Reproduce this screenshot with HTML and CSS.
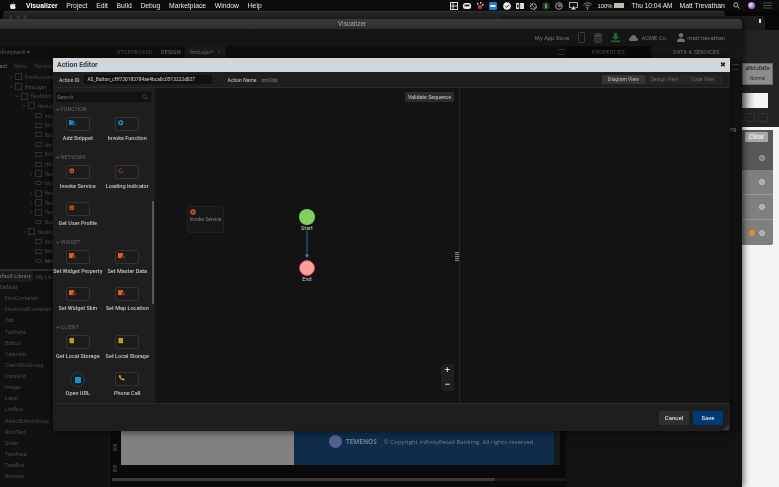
FILE: index.html
```html
<!DOCTYPE html>
<html lang="en">
<head>
<meta charset="utf-8">
<title>Action Editor</title>
<link rel="stylesheet" href="styles.css">
</head>
<body>
<svg class="defs" width="0" height="0" aria-hidden="true">
  <symbol id="gear" viewBox="0 0 6 6"><circle cx="3" cy="3" r="2.1" fill="#1c1c1c" stroke="#ea601c" stroke-width="1.2"/><circle cx="3" cy="3" r=".8" fill="#ea601c"/></symbol>
  <symbol id="gearDim" viewBox="0 0 6 6"><circle cx="3" cy="3" r="2.1" fill="none" stroke="#a8481c" stroke-width=".9" stroke-dasharray="10 2"/></symbol>
  <symbol id="blueRing" viewBox="0 0 6 6"><circle cx="3" cy="3" r="2.1" fill="#0c2a3a" stroke="#12a2e2" stroke-width="1.3"/></symbol>
  <symbol id="widget" viewBox="0 0 9 7"><rect x="0" y="0" width="6" height="6" fill="#ee5a1e"/><circle cx="6.5" cy="4.5" r="2.2" fill="#5e3218"/></symbol>
  <symbol id="snippet" viewBox="0 0 9 7"><path d="M0 0h2.5l.7.8H6V6H0z" fill="#1688d6"/><circle cx="6.5" cy="4.5" r="2.2" fill="#174a66"/></symbol>
  <symbol id="db" viewBox="0 0 5 6"><rect width="5" height="6" rx="1" fill="#e2a21c"/><path d="M0 2h5M0 4h5" stroke="#7a5a12" stroke-width=".4"/></symbol>
  <symbol id="phone" viewBox="0 0 7 6"><path d="M.6.5 2 0l.9 1.4-.7.6c.3.8.9 1.4 1.8 1.8l.7-.6L6.6 4l-.4 1.3C3.300 5.600.6 3.200.6.500z" fill="#e8a01c"/></symbol>
  <symbol id="mag" viewBox="0 0 8 8"><circle cx="3.300" cy="3.300" r="2.400" fill="none" stroke="currentColor" stroke-width=".9"/><path d="M5.100 5.100 7.500 7.500" stroke="currentColor" stroke-width="1"/></symbol>
  <symbol id="chev" viewBox="0 0 6 4"><path d="M.7.7 3 3.200 5.300.7" fill="none" stroke="currentColor" stroke-width=".9"/></symbol>
  <symbol id="chevr" viewBox="0 0 4 6"><path d="M.7.700 3.200 3 .7 5.300" fill="none" stroke="currentColor" stroke-width=".8"/></symbol>
</svg>

<div class="desktop">
  <header class="menubar">
    <svg class="apple" viewBox="0 0 10 12"><path d="M7 0c.1 1-.9 2.300-2.100 2.300C4.800 1.200 5.900.100 7 0zM9.600 8.500c-.5 1.400-1.700 3.300-2.800 3.300-.8 0-1.100-.5-2-.5s-1.200.5-2 .5C1.500 11.800 0 9.100 0 6.900 0 4.600 1.500 3.200 3 3.200c.8 0 1.400.5 2 .5s1.300-.6 2.300-.5c.6 0 1.700.2 2.300 1.200-1.800 1.100-1.500 3.500 0 4.100z" fill="#e8e8e8"/></svg>
    <nav class="menus">
      <span class="menu-strong">Visualizer</span><span>Project</span><span>Edit</span><span>Build</span><span>Debug</span><span>Marketplace</span><span>Window</span><span>Help</span>
    </nav>
    <div class="status">
      <svg class="st" viewBox="0 0 8 8"><rect x=".5" y=".5" width="7" height="7" fill="none" stroke="#ddd"/><path d="M.5 4h7M3 .5v7" stroke="#ddd"/></svg>
      <svg class="st" viewBox="0 0 8 8"><rect y="1" width="8" height="6" rx="2.500" fill="#eee"/><rect x="1.500" y="2.500" width="5" height="2" fill="#333"/></svg>
      <svg class="st" viewBox="0 0 8 8"><circle cx="4" cy="5" r="2.200" fill="#c8302a"/><path d="M1 1h1.500v1.500H1zM4 0h1.500v1.500H4zM6 2h1.500v1.500H6z" fill="#ddd"/></svg>
      <svg class="st" viewBox="0 0 8 8"><rect width="8" height="8" rx="1.500" fill="#2a7ad6"/><rect x="1.500" y="3" width="5" height="2" fill="#dff"/></svg>
      <svg class="st" viewBox="0 0 8 8"><circle cx="4" cy="4" r="3.800" fill="#eee"/><path d="M2.200 4 3.600 5.400 6 2.600" fill="none" stroke="#333"/></svg>
      <svg class="st" viewBox="0 0 8 8"><rect y="1" width="8" height="6" fill="#ddd"/><path d="M3.600 1v6" stroke="#222"/><rect x="1" y="2.500" width="1.500" height="3" fill="#222"/></svg>
      <svg class="st" viewBox="0 0 8 8"><circle cx="4.500" cy="4.500" r="2.800" fill="none" stroke="#aaa" stroke-width="1.200" stroke-dasharray="2 .7"/><path d="M1 1 7 7" stroke="#999" stroke-width=".7"/></svg>
      <svg class="st" viewBox="0 0 8 8"><circle cx="4" cy="4" r="3.800" fill="#1d3a22"/><path d="M4 1.400v5.200M5 2.700H3.400v1.300h1.200v1.300H3" fill="none" stroke="#7cc67c" stroke-width=".7"/></svg>
      <svg class="st" viewBox="0 0 8 8"><circle cx="4" cy="4" r="3.300" fill="none" stroke="#ccc" stroke-width=".8"/><circle cx="4.500" cy="3.500" r="1.800" fill="#777"/></svg>
      <svg class="st st-wide" viewBox="0 0 9 8"><path d="M.5.500h8v5h-2M2.500 5.500h-2v-5" fill="none" stroke="#ddd" stroke-width=".8"/><path d="M4.500 4 7 7.600H2z" fill="#ddd"/></svg>
      <svg class="st st-wide" viewBox="0 0 9 8"><path d="M.5 2.700c2.300-2.400 5.700-2.400 8 0M2 4.200c1.500-1.500 3.500-1.500 5 0M3.300 5.600c.7-.7 1.700-.7 2.400 0" fill="none" stroke="#ccc" stroke-width=".7"/><circle cx="4.500" cy="7" r=".7" fill="#ccc"/></svg>
      <span class="st-text pct">100%</span>
      <span class="battery"><span class="battery-in">⚡</span></span>
      <span class="st-text clock">Thu 10:04 AM</span>
      <span class="st-text who">Matt Trevathan</span>
      <svg class="st st-search" viewBox="0 0 8 8"><use href="#mag"/></svg>
      <span class="siri"></span>
      <svg class="st st-list" viewBox="0 0 9 7"><path d="M0 1h9M0 3.500h9M0 6h9" stroke="#555" stroke-width=".9"/></svg>
    </div>
  </header>

  <div class="backwin backwin-a">
    <div class="lights"><i></i><i></i><i></i></div>
  </div>
  <div class="backwin backwin-b"><span class="backmark"></span></div>

  <aside class="sidewin">
    <div class="side-top">
      <div class="swatch"><span class="swatch-a">aBbCcDdEe</span><span class="swatch-b">Normal</span></div>
      <div class="side-white"></div>
      <div class="side-tools"><i></i><i></i></div>
    </div>
    <div class="side-page"></div>
    <div class="popup">
      <div class="popup-head"><span class="clear">Clear</span></div>
      <div class="popup-row popup-row-sel"><span class="ring"></span></div>
      <div class="popup-row"><span class="ring"></span></div>
      <div class="popup-row"><span class="ring"></span></div>
      <div class="popup-row popup-row-last"><span class="dot-orange"></span><span class="ring"></span></div>
    </div>
  </aside>

  <main class="app">
    <div class="app-title">Visualizer</div>
    <div class="app-toolbar">
      <span class="tb-text tb-store">My App Store</span>
      <svg class="tb-icon" viewBox="0 0 7 11"><rect x=".5" y=".5" width="6" height="10" rx="1" fill="none" stroke="#3a3a3a"/></svg>
      <svg class="tb-icon tb-tablet" viewBox="0 0 8 10"><rect x=".5" y=".5" width="7" height="9" rx="1" fill="#2e2e2e" stroke="#3c3c3c"/><path d="M1.500 2.500h5" stroke="#555"/></svg>
      <svg class="tb-icon tb-dl" viewBox="0 0 9 9"><path d="M3 0h3v3.500h2.200L4.500 7 .8 3.500H3z" fill="#1f6a2e"/><rect y="7.500" width="9" height="1.500" fill="#1f6a2e"/></svg>
      <svg class="tb-icon tb-cloud" viewBox="0 0 9 6"><path d="M2 6C.8 6 0 5.200 0 4.200 0 3.200.8 2.600 1.600 2.600 1.900 1 3.100 0 4.500 0 6 0 7 1 7.200 2.400 8.300 2.500 9 3.300 9 4.200 9 5.200 8.200 6 7 6z" fill="#707070"/></svg>
      <span class="tb-text tb-acme">ACME Co.</span>
      <svg class="tb-icon tb-user" viewBox="0 0 8 9"><circle cx="4" cy="2.300" r="2.200" fill="#707070"/><path d="M0 9c0-3 1.500-3.800 4-3.800S8 6 8 9z" fill="#707070"/></svg>
      <span class="tb-text">matt trevathan</span>
    </div>
    <div class="app-tabs">
      <span class="brand">Infinitybank ▾</span>
      <span class="tab tab-story">STORYBOARD</span>
      <span class="tab tab-design">DESIGN</span>
      <span class="tab-file">frmLogin* <b>×</b></span>
      <span class="tabs-fill"></span>
      <span class="burger"></span>
      <span class="tab tab-props">PROPERTIES</span>
      <span class="tab tab-data">DATA &amp; SERVICES</span>
    </div>
    <div class="app-main">
      <section class="leftcol">
        <div class="subtabs"><span>Project</span><span>Skins</span><span>Templates</span></div>
        <div class="tree">
          <div class="node l1"><svg class="ar"><use href="#chevr"/></svg><i class="bx"></i>frmAccount</div>
          <div class="node l1 ital"><svg class="ar"><use href="#chev"/></svg><i class="bx"></i>frmLogin</div>
          <div class="node l2"><svg class="ar"><use href="#chev"/></svg><i class="bx"></i>flexMain</div>
          <div class="node l3"><svg class="ar"><use href="#chev"/></svg><i class="bx"></i>flexLeft</div>
          <div class="node l4"><i class="sm"></i>imgLogo</div>
          <div class="node l4"><i class="sm"></i>lblWelcome</div>
          <div class="node l4"><i class="sm"></i>lblUser</div>
          <div class="node l4"><i class="sm"></i>tbxUser</div>
          <div class="node l4"><i class="sm"></i>lblPass</div>
          <div class="node l4"><i class="sm"></i>tbxPass</div>
          <div class="node l4"><svg class="ar"><use href="#chevr"/></svg><i class="bx"></i>flexRem</div>
          <div class="node l4"><i class="pill"></i>btnLogin</div>
          <div class="node l4"><svg class="ar"><use href="#chevr"/></svg><i class="bx"></i>flexOne</div>
          <div class="node l4"><svg class="ar"><use href="#chevr"/></svg><i class="bx"></i>flexTwo</div>
          <div class="node l4"><svg class="ar"><use href="#chevr"/></svg><i class="bx"></i>flexSix</div>
          <div class="node l4"><i class="pill"></i>Button</div>
          <div class="node l3"><svg class="ar"><use href="#chev"/></svg><i class="bx"></i>flexRight</div>
          <div class="node l4"><i class="sm"></i>lblInfo</div>
          <div class="node l4"><i class="sm"></i>lblHelp</div>
          <div class="node l4 picked"><i class="pill"></i>btnGo</div>
        </div>
        <div class="libtabs"><span class="libtab-on">Default Library</span><span class="libtab-off">My Library</span></div>
        <div class="lib">
          <div class="lib-head">Default</div>
          <div>FlexContainer</div><div>FlexScrollContainer</div><div>Tab</div><div>TabPane</div><div>Button</div><div>Calendar</div><div>CheckBoxGroup</div><div>DataGrid</div><div>Image</div><div>Label</div><div>ListBox</div><div>RadioButtonGroup</div><div>RichText</div><div>Slider</div><div>TextArea</div><div>TextBox</div><div>Browser</div>
        </div>
      </section>
      <section class="centercol">
        <div class="center-fill"></div>
        <div class="preview">
          <div class="ruler"><span>008</span><span class="ruler-low">009</span></div>
          <div class="pv-gray"></div>
          <div class="pv-blue">
            <span class="pv-logo"></span><span class="pv-brand">TEMENOS</span><span class="pv-copy">© Copyright InfinityRetail Banking. All rights reserved.</span>
          </div>
          <div class="pv-edge"></div>
        </div>
        <div class="hscroll"><span class="hthumb"></span></div>
      </section>
      <section class="rightcol"><span class="ing">ing</span></section>
    </div>
  </main>
  <div class="sidebar-burger"></div>

  <div class="modal">
    <div class="m-head"><span class="m-title">Action Editor</span><span class="m-close">✖</span></div>
    <div class="m-info">
      <label class="m-label">Action ID</label>
      <span class="m-input">AS_Button_cfff730183784ae4bca0c0513222d027</span>
      <label class="m-label m-label-name">Action Name</label>
      <span class="m-value">onClick</span>
      <div class="seg"><span class="seg-on">Diagram View</span><span>Design View</span><span>Code View</span></div>
    </div>
    <div class="m-body">
      <div class="palette">
        <div class="search"><span>Search</span><svg class="search-ic"><use href="#mag"/></svg></div>
        <div class="scroll-thumb"></div>

        <div class="p-head"><svg class="p-chev"><use href="#chev"/></svg>FUNCTION</div>
        <div class="p-grid">
          <div class="item"><span class="tile"><svg class="ic ic-w"><use href="#snippet"/></svg></span>Add Snippet</div>
          <div class="item"><span class="tile"><svg class="ic"><use href="#blueRing"/></svg></span>Invoke Function</div>
        </div>
        <div class="p-head"><svg class="p-chev"><use href="#chev"/></svg>NETWORK</div>
        <div class="p-grid">
          <div class="item"><span class="tile"><svg class="ic"><use href="#gear"/></svg></span>Invoke Service</div>
          <div class="item"><span class="tile"><svg class="ic"><use href="#gearDim"/></svg></span>Loading Indicator</div>
          <div class="item"><span class="tile"><svg class="ic"><use href="#gear"/></svg></span>Get User Profile</div>
        </div>
        <div class="p-head"><svg class="p-chev"><use href="#chev"/></svg>WIDGET</div>
        <div class="p-grid">
          <div class="item"><span class="tile"><svg class="ic ic-w"><use href="#widget"/></svg></span>Set Widget Property</div>
          <div class="item"><span class="tile"><svg class="ic ic-w"><use href="#widget"/></svg></span>Set Master Data</div>
          <div class="item"><span class="tile"><svg class="ic ic-w"><use href="#widget"/></svg></span>Set Widget Skin</div>
          <div class="item"><span class="tile"><svg class="ic ic-w"><use href="#widget"/></svg></span>Set Map Location</div>
        </div>
        <div class="p-head"><svg class="p-chev"><use href="#chev"/></svg>CLIENT</div>
        <div class="p-grid">
          <div class="item"><span class="tile"><svg class="ic"><use href="#db"/></svg></span>Get Local Storage</div>
          <div class="item"><span class="tile"><svg class="ic"><use href="#db"/></svg></span>Set Local Storage</div>
          <div class="item"><span class="tile tile-round"><span class="url-sq"></span></span>Open URL</div>
          <div class="item"><span class="tile"><svg class="ic ic-w"><use href="#phone"/></svg></span>Phone Call</div>
        </div>
      </div>
      <div class="canvas">
        <button class="validate">Validate Sequence</button>
        <div class="svc-node"><svg class="svc-ic"><use href="#gear"/></svg><span>Invoke Service</span></div>
        <div class="start"></div>
        <span class="flow-label start-label">Start</span>
        <svg class="arrow" viewBox="0 0 6 28"><path d="M3 0v24" stroke="#3f63a8" stroke-width="1"/><path d="M1 23.500h4L3 27z" fill="#4d7fd0"/></svg>
        <div class="end"></div>
        <span class="flow-label end-label">End</span>
        <div class="zoomer"><span>+</span><span>−</span></div>
        <div class="grip"></div>
      </div>
      <div class="m-side"></div>
    </div>
    <div class="m-foot">
      <button class="btn btn-cancel">Cancel</button>
      <button class="btn btn-save">Save</button>
      <svg class="resize" viewBox="0 0 6 6"><path d="M0 6 6 0M2 6 6 2M4 6 6 4" stroke="#777" stroke-width=".6"/></svg>
    </div>
  </div>
</div>
</body>
</html>
```

FILE: styles.css
```css
* { box-sizing: border-box; }
html, body { margin: 0; padding: 0; height: 100%; background: #060606; overflow: hidden; }
body { font-family: Roboto, "Liberation Sans", sans-serif; }
.defs { position: absolute; }
.desktop { position: relative; width: 779px; height: 487px; overflow: hidden; background: #060606; filter: blur(.3px); }

/* menu bar */
.menubar { display: flex; align-items: center; height: 11px; background: #0b0b0b; color: #e6e6e6; font: 6.8px "Liberation Sans", sans-serif; padding-left: 10px; }
.apple { width: 6px; height: 7.5px; }
.menus { display: flex; gap: 8.700px; margin-left: 10px; }
.menu-strong { font-weight: 700; color: #fff; }
.status { display: flex; align-items: center; margin-left: auto; padding-right: 7px; }
.st { width: 8px; height: 8px; margin-right: 5.200px; flex: none; }
.st-wide { width: 9px; margin-right: 5.500px; }
.st-text { white-space: nowrap; }
.pct { font-size: 5.800px; width: 16px; }
.battery { width: 10px; height: 5px; background: #bbb; margin-right: 8px; display: flex; align-items: center; justify-content: center; }
.battery-in { font-size: 4px; line-height: 1; color: #222; }
.clock { width: 48px; font-size: 6.600px; }
.who { width: 53px; font-size: 6.800px; }
.st-search { color: #ddd; margin-right: 8px; width: 7px; height: 7px; }
.siri { width: 7.500px; height: 7.500px; border-radius: 50%; background: radial-gradient(circle at 40% 40%, #f3e0f5, #b06ad0 55%, #4a88dc); margin-right: 8px; }
.st-list { width: 9px; height: 7px; margin-right: 0; }

/* background windows */
.backwin { position: absolute; border-radius: 3px 3px 0 0; }
.backwin-a { left: 3px; top: 11px; width: 722px; height: 20px; background: #242424; border-top: 1px solid #333; }
.backwin-b { left: 500px; top: 16px; width: 265px; height: 16px; background: #1c1c1c; }
.backmark { position: absolute; right: 4px; top: 3px; width: 2px; height: 4px; background: #ddd; }
.lights { display: flex; gap: 3px; padding: 3px 6px; }
.lights i { width: 4px; height: 4px; border-radius: 50%; background: #3a3a3a; }

/* window at the right edge */
.sidewin { position: absolute; left: 730px; top: 30px; width: 49px; height: 457px; display: flex; flex-direction: column; background: #f6f4f3; }
.side-top { height: 97px; background: #232323; padding: 33px 0 0 12px; }
.swatch { width: 31px; height: 22px; background: #8c8c8c; border: 1px solid #6a6a6a; display: flex; flex-direction: column; align-items: center; font-size: 4.600px; color: #262626; line-height: 10px; overflow: hidden; }
.swatch-a { font-weight: 500; white-space: nowrap; }
.swatch-b { color: #333; }
.side-white { width: 26px; height: 15px; margin-top: 8px; background: linear-gradient(90deg, #9a9a9a, #f4f4f4 50%, #f4f4f4); }
.side-tools { display: flex; gap: 3px; margin-top: 5px; padding-left: 3px; }
.side-tools i { width: 10px; height: 9px; border: 1px solid #333; border-radius: 2px; }
.side-page { flex: 1; }
.popup { position: absolute; left: 12px; top: 100px; width: 31px; height: 115px; background: #7f7f7f; border-radius: 0 2px 2px 0; display: flex; flex-direction: column; }
.popup-head { height: 15px; padding: 2px 5px 0 3px; background: #585858; }
.clear { display: block; width: 23px; height: 10px; background: #a8a8a8; border-radius: 1px; color: #eee; font-size: 6.500px; font-weight: 700; line-height: 10px; text-align: center; }
.popup-row { height: 25px; display: flex; align-items: center; justify-content: flex-end; gap: 4px; padding-right: 8px; border-bottom: 1px solid #9a9a9a; }
.popup-row-sel { background: #585858; border-bottom: 0; }
.popup-row-last { border-bottom: 0; }
.ring { width: 6px; height: 6px; border-radius: 50%; background: #aaa; border: 1px solid #c4c4c4; }
.popup-row-sel .ring { background: #777; border-color: #aaa; }
.dot-orange { width: 6px; height: 6px; border-radius: 50%; background: #ef8a1e; }
.sidebar-burger { position: absolute; left: 732px; top: 64px; width: 7px; height: 6px; border-top: 1px solid #333; border-bottom: 1px solid #333; }

/* main application window */
.app { position: absolute; left: 0; top: 19px; width: 742px; height: 468px; display: flex; flex-direction: column; background: #0f0f0f; box-shadow: 2px 0 6px rgba(0, 0, 0, .55); color: #666; font-size: 5.400px; }
.app-title { height: 10px; flex: none; background: linear-gradient(#3a3a3a, #2c2c2c); color: #a8a8a8; font-size: 6.500px; line-height: 10px; text-align: center; padding-right: 38px; border-radius: 0 4px 0 0; }
.app-toolbar { height: 17px; flex: none; display: flex; align-items: center; justify-content: flex-end; padding-right: 17px; background: #151515; }
.tb-text { color: #747474; font-size: 5.800px; white-space: nowrap; }
.tb-store { margin-right: 9px; }
.tb-icon { width: 7px; height: 11px; margin-right: 9px; flex: none; }
.tb-tablet { width: 8px; height: 10px; margin-right: 9px; }
.tb-dl { width: 9px; height: 9px; margin-right: 9px; }
.tb-cloud { width: 9px; height: 6px; margin-right: 3px; }
.tb-acme { margin-right: 10px; }
.tb-user { width: 8px; height: 9px; margin-right: 2px; }
.app-tabs { height: 12px; flex: none; display: flex; align-items: center; background: #0e0e0e; white-space: nowrap; }
.brand { margin-left: -3px; width: 120px; color: #585858; font-size: 5.600px; }
.tab { color: #4d4d4d; font-size: 5.200px; letter-spacing: .3px; }
.tab-story { width: 44px; }
.tab-design { color: #7a7a7a; width: 24px; }
.tab-file { height: 12px; width: 41px; background: #1a1a1a; color: #6a6a6a; font-style: italic; line-height: 12px; padding-left: 5px; }
.tab-file b { margin-left: 3px; font-weight: 400; font-style: normal; color: #444; }
.tabs-fill { flex: 1; }
.burger { width: 6px; height: 6px; border-top: 1px solid #333; border-bottom: 1px solid #333; margin-right: 2px; }
.tab-props { width: 85px; height: 12px; line-height: 12px; background: #090909; text-align: center; }
.tab-data { width: 91px; height: 12px; line-height: 12px; color: #7a7a7a; background: #171717; text-align: center; }
.app-main { flex: 1; min-height: 0; display: flex; }

.leftcol { width: 110px; flex: none; display: flex; flex-direction: column; background: #111; border-right: 1px solid #1b1b1b; overflow: hidden; }
.subtabs { height: 14px; flex: none; display: flex; gap: 7px; align-items: center; margin-left: -10px; padding-top: 2px; color: #444; white-space: nowrap; }
.subtabs span:first-child { color: #7a7a7a; }
.tree { height: 197px; flex: none; padding-top: 0; }
.node { height: 9.700px; display: flex; align-items: center; white-space: nowrap; color: #464646; position: relative; }
.ital { font-style: italic; color: #545454; }
.l1 { padding-left: 15px; }
.l2 { padding-left: 21px; }
.l3 { padding-left: 28px; }
.l4 { padding-left: 35px; }
.ar { position: absolute; width: 4px; height: 4px; margin-left: -6px; color: #4a4a4a; }
.bx { width: 7px; height: 7px; border: 1px solid #303030; margin-right: 3px; flex: none; }
.sm { width: 7px; height: 5px; border: 1px solid #303030; margin-right: 3px; flex: none; }
.pill { width: 7px; height: 4px; border: 1px solid #343434; border-radius: 2px; margin-right: 3px; flex: none; }
.picked { color: #2f6ca8; }
.libtabs { height: 13px; flex: none; display: flex; align-items: center; border-top: 2px solid #2c2c2c; white-space: nowrap; margin-left: -5px; font-size: 5.600px; }
.libtab-on { height: 11px; line-height: 11px; width: 38px; background: #1b1b1b; color: #7a7a7a; padding-left: 0; }
.libtab-off { padding-left: 3px; color: #4a4a4a; }
.lib { flex: 1; padding-left: 5px; color: #484848; line-height: 11.130px; }
.lib-head { margin-left: -5px; color: #545454; }

.centercol { width: 456px; flex: none; display: flex; flex-direction: column; background: #0a0a0a; }
.center-fill { flex: 1; }
.preview { height: 34px; flex: none; display: flex; }
.ruler { width: 11px; flex: none; position: relative; }
.ruler span { position: absolute; left: 2px; top: 14px; font-size: 4.500px; color: #555; transform: rotate(-90deg); }
.ruler .ruler-low { top: 35px; }
.pv-gray { width: 173px; flex: none; background: #808080; }
.pv-blue { width: 260px; flex: none; background: #0f2c4b; display: flex; align-items: flex-start; padding: 4px 0 0 35px; color: #71808f; white-space: nowrap; }
.pv-logo { width: 13px; height: 13px; border-radius: 50%; background: #55608e; margin-right: 4px; }
.pv-brand { font: 700 6.400px/13px "Open Sans", sans-serif; margin-right: 7px; }
.pv-copy { font: 6.100px/13px "Open Sans", sans-serif; }
.pv-edge { width: 6px; flex: none; background: #161b20; }
.hscroll { height: 3px; margin: 13px 0 6px 2px; flex: none; background: #1a1a1a; }
.hthumb { display: block; width: 383px; height: 3px; background: #3c3c3c; border-radius: 1px; }
.rightcol { flex: 1; background: #121212; position: relative; }
.ing { position: absolute; right: 6px; top: 68px; color: #888; font-size: 5.500px; }

/* action editor dialog */
.modal { position: absolute; left: 53px; top: 58px; width: 677px; height: 373px; display: flex; flex-direction: column; background: #1e1e1e; box-shadow: 0 0 8px rgba(0, 0, 0, .7); color: #ccc; }
.m-head { height: 14px; flex: none; display: flex; align-items: center; justify-content: space-between; padding: 0 4px 0 4px; background: #d0d6da; }
.m-title { color: #3a4046; font-size: 7px; font-weight: 700; }
.m-close { color: #1a1a1a; font-size: 7px; line-height: 1; }
.m-info { height: 16px; flex: none; display: flex; align-items: center; background: #1e1e1e; border-bottom: 1px solid #2a2a2a; padding: 0 8px 0 6px; font-size: 5px; white-space: nowrap; }
.m-label { color: #b4b4b4; font-weight: 500; }
.m-input { width: 128px; height: 9px; line-height: 9px; margin-left: 5px; padding-left: 3px; background: #111; color: #b8b8b8; font-size: 4.800px; font-weight: 500; border-radius: 1px; }
.m-label-name { margin-left: 15px; }
.m-value { margin-left: 5px; color: #8a8a8a; }
.seg { margin-left: auto; display: flex; height: 9px; background: #252525; color: #666; line-height: 9px; text-align: center; }
.seg span { width: 38.500px; }
.seg .seg-on { width: 43px; background: #363636; color: #bbb; }
.m-body { flex: 1; min-height: 0; display: flex; border-bottom: 1px solid #2a2a2a; }

.palette { width: 102px; flex: none; padding: 4px 0 0 3px; position: relative; background: #1e1e1e; }
.search { width: 95px; height: 10px; display: flex; justify-content: space-between; align-items: center; padding: 0 3px 0 1px; background: #111; color: #707070; font-size: 5.400px; margin-bottom: 2px; }
.search-ic { width: 6px; height: 6px; color: #555; }
.scroll-thumb { position: absolute; left: 99px; top: 113px; width: 2px; height: 103px; background: #555; }
.p-head { height: 13px; padding-top: 0; padding-left: 0; display: flex; align-items: flex-start; gap: 1px; line-height: 10px; color: #666; font-size: 5px; letter-spacing: .2px; }
.p-chev { width: 4px; height: 3px; margin-top: 4px; color: #999; }
.p-grid { display: grid; grid-template-columns: 49.500px 49.500px; grid-auto-rows: 35px; row-gap: 2px; margin-left: -2px; }
.item { display: flex; flex-direction: column; align-items: center; color: #c4c4c4; font-size: 5.500px; font-weight: 500; white-space: nowrap; line-height: 8px; padding-right: 2px; }
.tile { display: block; width: 24px; height: 14px; margin-bottom: 3px; padding: 2px 0 0 2px; background: #1c1c1c; border: 1px solid #333; border-radius: 2px; flex: none; }
.ic { display: block; width: 5.500px; height: 5.500px; }
.ic-w { width: 7.500px; height: 6px; }
.tile-round { width: 15px; height: 15px; border-radius: 50%; border-color: #1e4258; padding: 3.500px; margin-bottom: 2px; }
.url-sq { display: block; width: 6px; height: 6px; background: #1890cc; }

.canvas { width: 305px; flex: none; position: relative; background: #131313; border-right: 1px solid #262626; }
.validate { position: absolute; left: 250px; top: 4px; width: 49px; height: 10px; padding: 0; border: 0; border-radius: 1px; background: #2c2c2c; color: #bdbdbd; font: 500 5.200px/10px Roboto, sans-serif; }
.svc-node { position: absolute; left: 32px; top: 118px; width: 37px; height: 27px; border: 1px solid #222; border-radius: 3px; background: #171717; color: #808080; font-size: 5px; text-align: center; padding-top: 9px; white-space: nowrap; }
.svc-ic { position: absolute; left: 2px; top: 2px; width: 6px; height: 6px; }
.start { position: absolute; left: 144px; top: 121px; width: 16px; height: 16px; border-radius: 50%; background: #7fd15c; }
.end { position: absolute; left: 144px; top: 172px; width: 16px; height: 16px; border-radius: 50%; background: #ff9f9f; border: 1px solid #d84a4a; }
.flow-label { position: absolute; left: 137px; width: 30px; text-align: center; color: #c8c8c8; font-size: 5.500px; line-height: 8px; }
.start-label { top: 136px; }
.end-label { top: 187px; }
.arrow { position: absolute; left: 149px; top: 143px; width: 6px; height: 28px; }
.zoomer { position: absolute; left: 286px; top: 276px; width: 13px; height: 27px; border-radius: 3px; background: #1f1f1f; display: flex; flex-direction: column; align-items: center; color: #d4d4d4; font: 700 9px/13.500px "Liberation Sans", sans-serif; }
.grip { position: absolute; right: 0; top: 164px; width: 4px; height: 9px; background: repeating-linear-gradient(#8a8a8a 0 1px, #131313 1px 2px); }
.m-side { flex: 1; background: #131313; }

.m-foot { height: 27px; flex: none; display: flex; align-items: center; justify-content: flex-end; gap: 4px; padding: 0 7px 0 0; position: relative; background: #1e1e1e; }
.btn { width: 30px; height: 14px; padding: 0; border: 0; border-radius: 1px; font: 500 6px/14px Roboto, sans-serif; color: #e2e2e2; }
.btn-cancel { background: #2e2e2e; }
.btn-save { background: #003a76; }
.resize { position: absolute; right: 1px; bottom: 1px; width: 5px; height: 5px; }
```
